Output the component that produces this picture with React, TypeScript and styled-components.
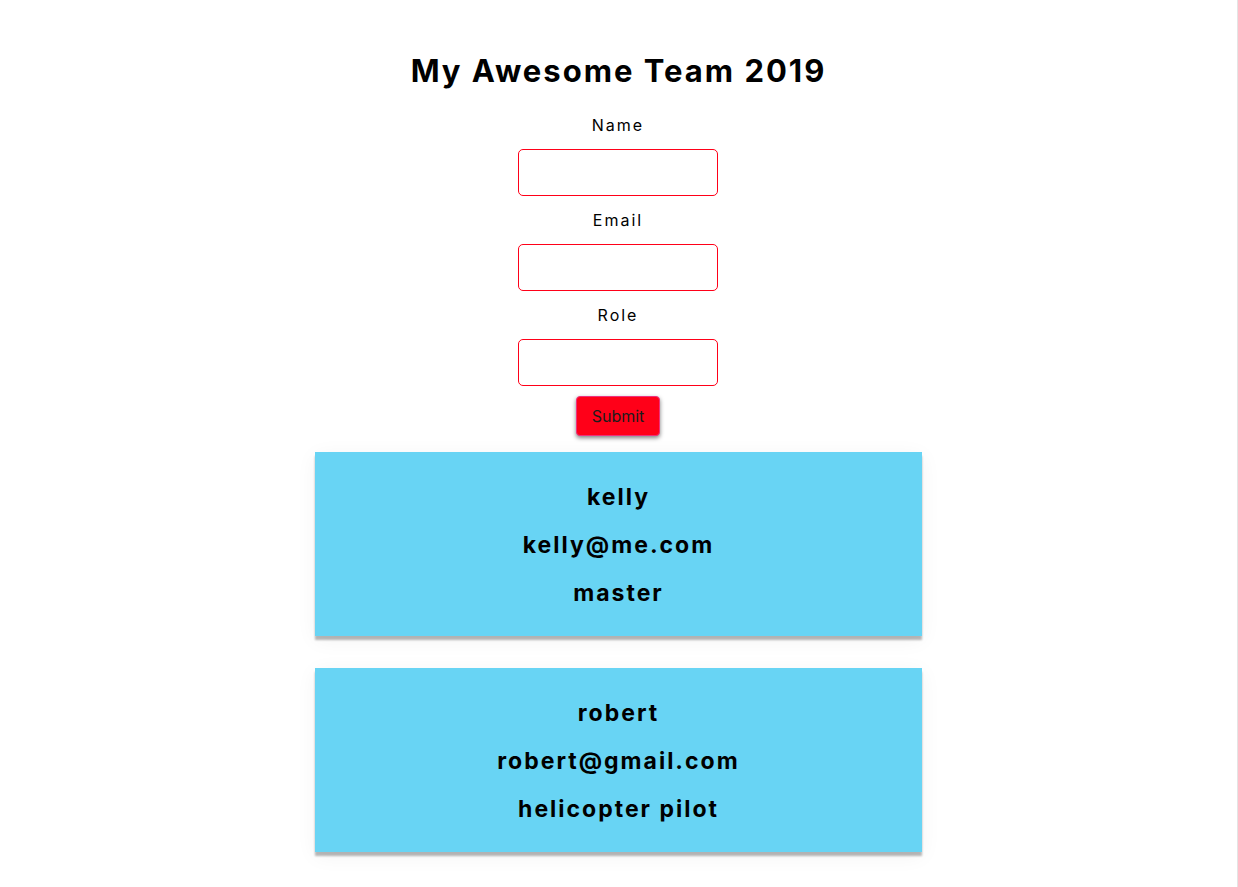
import React, { useState } from "react";
import styled, { createGlobalStyle } from "styled-components";

const GlobalStyle = createGlobalStyle`
  * { box-sizing: border-box; }
  body {
    margin: 0;
    background: #fff;
    color: #000;
    font-family: Inter, "Liberation Sans", sans-serif;
    font-size: 16px;
    line-height: 20px;
  }
`;

const Page = styled.main`
  display: flex;
  flex-direction: column;
  align-items: center;
  min-height: 100vh;
  padding: 51px 0 32px;
  border-right: 1px solid #e4e4e4;
  letter-spacing: 2px;
  text-align: center;
`;

const Title = styled.h1`
  margin: 0 0 24px;
  font-size: 31px;
  font-weight: 650;
  line-height: 40px;
`;

const Form = styled.form`
  display: flex;
  flex-direction: column;
  align-items: center;
  padding-right: 1px;
`;

const Label = styled.label`
  margin-bottom: 14px;
`;

const Input = styled.input`
  width: 200px;
  height: 47px;
  margin-bottom: 14px;
  padding: 0 12px;
  border: 1px solid #ff0018;
  border-radius: 5px;
  background: #fff;
  font: inherit;
`;

const SubmitButton = styled.button`
  height: 40px;
  margin-top: -4px;
  padding: 0 15px;
  border: 1px solid #f0307c;
  border-radius: 4px;
  background: #ff0018;
  box-shadow: 0 2px 4px rgba(0, 0, 0, 0.5);
  color: #1c1c1c;
  font: inherit;
`;

const Team = styled.section`
  display: flex;
  flex-direction: column;
  gap: 32px;
  width: 49%;
  margin-top: 16px;
`;

const Card = styled.article`
  display: flex;
  flex-direction: column;
  gap: 20px;
  padding: 31px 16px 29px;
  background: #68d4f4;
  box-shadow: 0 4px 2px rgba(0, 0, 0, 0.28), 0 4px 20px rgba(0, 0, 0, 0.05);
`;

const Detail = styled.h2`
  margin: 0;
  font-size: 23px;
  font-weight: 650;
  line-height: 28px;
`;

const fields = ["name", "email", "role"] as const;
type Member = Record<(typeof fields)[number], string>;
const labels: Member = { name: "Name", email: "Email", role: "Role" };
const blank: Member = { name: "", email: "", role: "" };

const initialTeam: Member[] = [
  { name: "kelly", email: "kelly@me.com", role: "master" },
  { name: "robert", email: "robert@gmail.com", role: "helicopter pilot" },
];

export default function App() {
  const [team, setTeam] = useState(initialTeam);
  const [draft, setDraft] = useState(blank);

  const submit = (event: React.FormEvent) => {
    event.preventDefault();
    setTeam([...team, draft]);
    setDraft(blank);
  };

  return (
    <>
      <GlobalStyle />
      <Page>
        <Title>My Awesome Team 2019</Title>
        <Form onSubmit={submit}>
          {fields.map((field) => (
            <React.Fragment key={field}>
              <Label htmlFor={field}>{labels[field]}</Label>
              <Input
                id={field}
                value={draft[field]}
                onChange={(event) => setDraft({ ...draft, [field]: event.target.value })}
              />
            </React.Fragment>
          ))}
          <SubmitButton type="submit">Submit</SubmitButton>
        </Form>
        <Team>
          {team.map((member, index) => (
            <Card key={index}>
              <Detail>{member.name}</Detail>
              <Detail>{member.email}</Detail>
              <Detail>{member.role}</Detail>
            </Card>
          ))}
        </Team>
      </Page>
    </>
  );
}
